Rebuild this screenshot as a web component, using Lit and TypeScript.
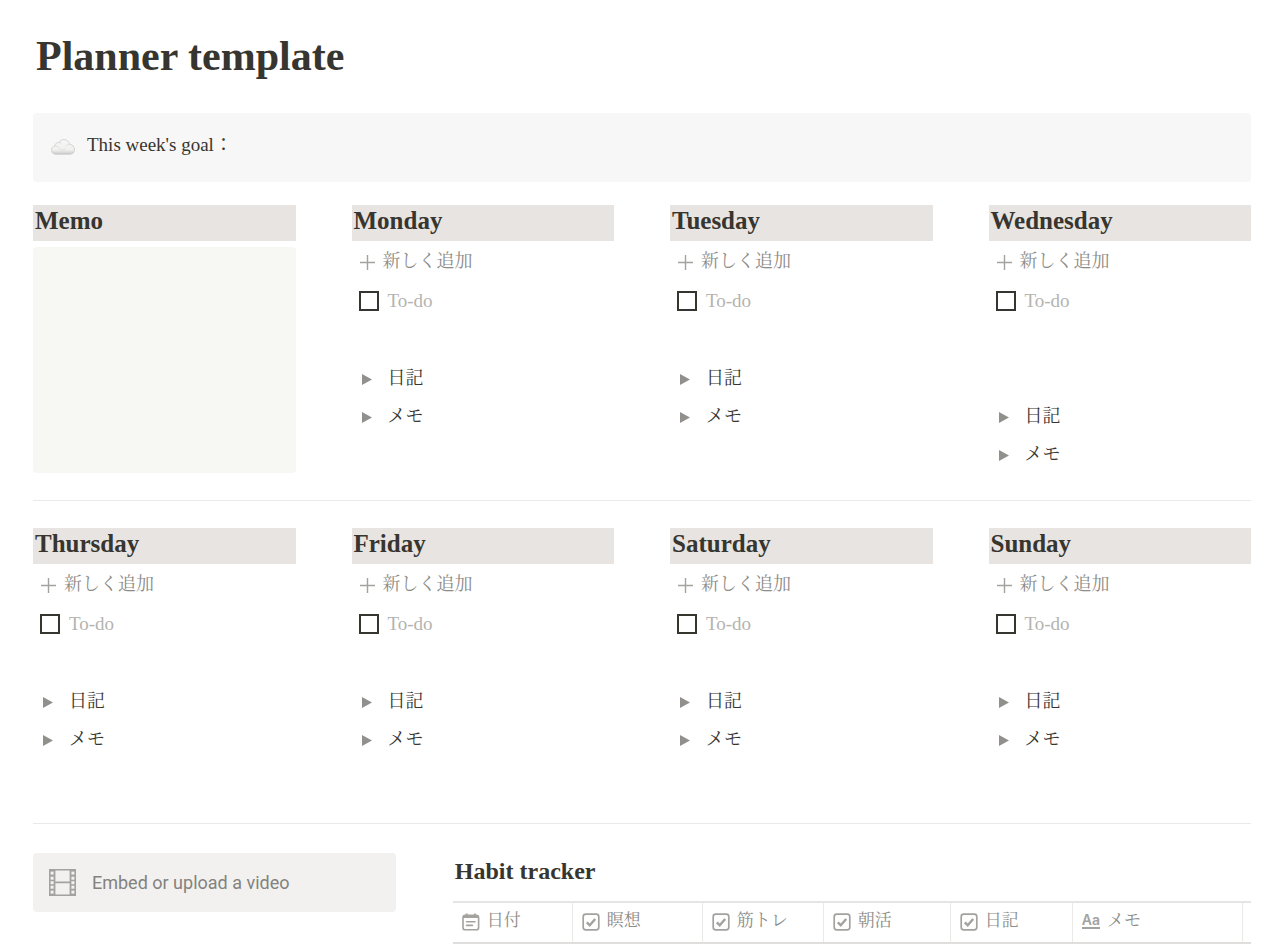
import { LitElement, html, css, svg } from "lit";
import { customElement, property } from "lit/decorators.js";

interface Day {
  name: string;
  blanks: number;
  trailing: number;
}

const FIRST_HALF: Day[] = [
  { name: "Monday", blanks: 1, trailing: 0 },
  { name: "Tuesday", blanks: 1, trailing: 0 },
  { name: "Wednesday", blanks: 2, trailing: 0 },
];

const SECOND_HALF: Day[] = [
  { name: "Thursday", blanks: 1, trailing: 1 },
  { name: "Friday", blanks: 1, trailing: 1 },
  { name: "Saturday", blanks: 1, trailing: 1 },
  { name: "Sunday", blanks: 1, trailing: 1 },
];

const HABITS = [
  { label: "日付", kind: "date", col: "c-date" },
  { label: "瞑想", kind: "check", col: "c-meditate" },
  { label: "筋トレ", kind: "check", col: "c-train" },
  { label: "朝活", kind: "check", col: "c-morning" },
  { label: "日記", kind: "check", col: "c-diary" },
  { label: "メモ", kind: "title", col: "c-memo" },
];

const heading = css`
  .heading {
    margin: 0;
    padding: 0 2px 4px;
    font-size: 25px;
    line-height: 32px;
    font-weight: 700;
    background: #e8e4e1;
  }
`;

@customElement("planner-day")
export class PlannerDay extends LitElement {
  @property({ attribute: false }) day!: Day;

  static styles = [
    heading,
    css`
      :host {
        display: block;
      }
      .row {
        display: flex;
        align-items: center;
        box-sizing: border-box;
        height: 38px;
      }
      .tall {
        height: 40px;
      }
      .add {
        width: 100%;
        padding: 0 0 0 8px;
        gap: 8px;
        border: 0;
        background: none;
        color: #8d8c88;
        font: inherit;
        font-size: 18px;
        text-align: left;
        cursor: pointer;
      }
      .plus {
        width: 15px;
        height: 15px;
        margin-top: 2px;
      }
      .todo {
        padding-left: 7px;
        gap: 9px;
        color: #b4b3b0;
      }
      .box {
        appearance: none;
        box-sizing: border-box;
        width: 20px;
        height: 20px;
        margin: 0;
        border: 2px solid #37352f;
        background: #fff;
      }
      .box:checked {
        background: #37352f;
      }
      .toggle {
        padding-left: 10px;
        gap: 16px;
        font-size: 18px;
        list-style: none;
        cursor: pointer;
      }
      .arrow {
        width: 10px;
        height: 11px;
        margin-top: 3px;
        fill: #91908c;
      }
      details[open] .arrow {
        transform: rotate(90deg);
      }
    `,
  ];

  private toggle(label: string) {
    return html`<details>
      <summary class="row toggle">
        <svg class="arrow" viewBox="0 0 10 11" aria-hidden="true"><path d="M0 0L10 5.5L0 11Z" /></svg>
        <span>${label}</span>
      </summary>
    </details>`;
  }

  private blanks(count: number) {
    return Array.from({ length: count }, () => html`<div class="row"></div>`);
  }

  render() {
    const { name, blanks, trailing } = this.day;
    return html`
      <h2 class="heading">${name}</h2>
      <button class="row tall add" type="button">
        <svg class="plus" viewBox="0 0 15 15" aria-hidden="true">
          <path d="M7.5 0V15M0 7.5H15" stroke="#a3a29f" stroke-width="1.4" />
        </svg>
        <span>新しく追加</span>
      </button>
      <div class="row tall todo">
        <input class="box" type="checkbox" id="todo" />
        <label for="todo">To-do</label>
      </div>
      ${this.blanks(blanks)} ${this.toggle("日記")} ${this.toggle("メモ")} ${this.blanks(trailing)}
    `;
  }
}

@customElement("app-root")
export class AppRoot extends LitElement {
  static styles = [
    heading,
    css`
      :host {
        display: block;
        box-sizing: border-box;
        padding: 30px 29px 0 33px;
        background: #fff;
        color: #37352f;
        font-family: "Liberation Serif", "Noto Serif CJK JP", "Noto Sans CJK JP", serif;
        font-size: 19px;
        line-height: 28px;
      }
      .title {
        margin: 0 0 31px;
        padding-left: 3px;
        font-size: 42px;
        line-height: 52px;
        font-weight: 700;
      }
      .callout {
        display: flex;
        align-items: flex-start;
        gap: 12px;
        box-sizing: border-box;
        min-height: 69px;
        margin-bottom: 23px;
        padding: 18px;
        border-radius: 4px;
        background: #f8f7f7;
      }
      .cloud {
        width: 24px;
        height: 16px;
        margin-top: 8px;
      }
      .week {
        display: grid;
        grid-template-columns: repeat(4, minmax(0, 1fr));
        column-gap: 56px;
      }
      .memo {
        display: flex;
        flex-direction: column;
        gap: 6px;
      }
      .pad {
        flex: 1;
        border-radius: 4px;
        background: #f7f8f3;
      }
      .rule {
        height: 1px;
        margin: 27px 0;
        border: 0;
        background: #e9e9e7;
      }
      .bottom {
        display: grid;
        grid-template-columns: minmax(0, 5fr) minmax(0, 11fr);
        column-gap: 57px;
        align-items: start;
        padding-top: 2px;
      }
      .video {
        display: flex;
        align-items: center;
        gap: 16px;
        min-height: 59px;
        padding: 0 16px;
        border: 0;
        border-radius: 4px;
        background: #f2f1ef;
        color: #83827e;
        font-family: Roboto, "Liberation Sans", sans-serif;
        font-size: 18px;
        text-align: left;
        cursor: pointer;
      }
      .film {
        width: 27px;
        height: 27px;
      }
      .subtitle {
        margin: 0;
        padding: 2px 2px 14px;
        font-size: 24px;
        line-height: 32px;
      }
      .habits {
        width: 100%;
        table-layout: fixed;
        border-collapse: separate;
        border-spacing: 0;
        border-top: 2px solid #e6e5e3;
        border-bottom: 2px solid #dfdedc;
      }
      .habits th {
        box-sizing: border-box;
        height: 39px;
        padding: 0 0 3px 9px;
        border-right: 1px solid #e9e9e7;
        color: #8d8c88;
        font-size: 17px;
        line-height: 24px;
        font-weight: 400;
        text-align: left;
      }
      .habits td {
        padding: 0;
      }
      .c-date {
        width: 120px;
      }
      .c-meditate {
        width: 130px;
      }
      .c-train {
        width: 121px;
      }
      .c-morning {
        width: 127px;
      }
      .c-diary {
        width: 122px;
      }
      .c-memo {
        width: 170px;
      }
      .name {
        display: flex;
        align-items: center;
        gap: 7px;
      }
      .kind {
        flex: none;
        width: 18px;
        height: 18px;
        margin-top: 2px;
      }
      .aa {
        border-bottom: 2px solid #a3a29f;
        color: #a3a29f;
        font-family: Inter, "Liberation Sans", sans-serif;
        font-size: 14px;
        line-height: 14px;
        font-weight: 600;
      }
    `,
  ];

  private kindIcon(kind: string) {
    if (kind === "title") return html`<span class="aa" aria-hidden="true">Aa</span>`;
    const shape =
      kind === "date"
        ? svg`<rect x="1" y="2.4" width="15.6" height="14.4" rx="2.4" fill="none" stroke="#a3a29f" stroke-width="1.6"/>
            <path d="M1 5V4.2Q1 2 3.2 2H14.4Q16.6 2 16.6 4.2V5ZM3.8 .6h1.8v2H3.8ZM12 .6h1.8v2H12Z" fill="#a3a29f"/>
            <path d="M4.6 8.8H13M4.6 12.4H10.4" stroke="#a3a29f" stroke-width="1.6" stroke-linecap="round"/>`
        : svg`<rect x="1.2" y="1.2" width="15.6" height="15.6" rx="2.6" fill="none" stroke="#a3a29f" stroke-width="1.7"/>
            <path d="M4.8 9.4L7.7 12.2L13.2 6" fill="none" stroke="#a3a29f" stroke-width="2.4"/>`;
    return html`<svg class="kind" viewBox="0 0 18 18" aria-hidden="true">${shape}</svg>`;
  }

  private film() {
    const holes = [2.6, 7.7, 12.2, 16.7, 21.6];
    return html`<svg class="film" viewBox="0 0 27 27" aria-hidden="true">
      <path
        fill="#a3a29f"
        fill-rule="evenodd"
        d="M0 0H27V27H0ZM6.4 1.6V12.6H20.6V1.6ZM6.4 14.2V25.4H20.6V14.2Z"
      />
      ${holes.map(
        (y) => svg`<rect x="1.6" y=${y} width="3" height="3" fill="#f2f1ef"/>
          <rect x="22.4" y=${y} width="3" height="3" fill="#f2f1ef"/>`,
      )}
    </svg>`;
  }

  render() {
    return html`
      <h1 class="title">Planner template</h1>
      <div class="callout">
        <svg class="cloud" viewBox="0 0 24 16" aria-hidden="true">
          <defs>
            <linearGradient id="sky" x1="0" y1="0" x2="0" y2="1">
              <stop offset="0" stop-color="#f7f7f7" />
              <stop offset=".7" stop-color="#f0f0ef" />
              <stop offset="1" stop-color="#c9c8c6" />
            </linearGradient>
          </defs>
          <path
            d="M5 15.3C2.3 15.3 .5 13.6 .5 11.2C.5 9 2 7.3 4 7C4 4.6 5.8 3.3 8 3.5C9 1.6 10.8 .6 13 .6C16 .6 18.2 2.6 18.5 5.3C21.5 5.5 23.5 7.8 23.5 10.6C23.5 13.5 21.5 15.3 18.8 15.3Z"
            fill="url(#sky)"
            stroke="#cccbc9"
            stroke-width=".8"
          />
          <path
            d="M4 7C5.6 6.8 7 7.5 7.7 8.7M8 3.5C9.2 3.6 10.2 4.2 10.7 5M18.5 5.3C17 5.2 15.4 6 14.8 7.6M8 9.6C10 11.6 13.5 11.2 15 9.4"
            fill="none"
            stroke="#dad9d7"
            stroke-width=".8"
          />
        </svg>
        <span>This week's goal：</span>
      </div>

      <section class="week">
        <div class="memo">
          <h2 class="heading">Memo</h2>
          <div class="pad"></div>
        </div>
        ${FIRST_HALF.map((day) => html`<planner-day .day=${day}></planner-day>`)}
      </section>
      <hr class="rule" />
      <section class="week">
        ${SECOND_HALF.map((day) => html`<planner-day .day=${day}></planner-day>`)}
      </section>
      <hr class="rule" />

      <section class="bottom">
        <button class="video" type="button">${this.film()}<span>Embed or upload a video</span></button>
        <div>
          <h2 class="subtitle">Habit tracker</h2>
          <table class="habits">
            <colgroup>
              ${HABITS.map((h) => html`<col class=${h.col} />`)}
              <col />
            </colgroup>
            <thead>
              <tr>
                ${HABITS.map(
                  (h) => html`<th scope="col">
                    <div class="name">${this.kindIcon(h.kind)}<span>${h.label}</span></div>
                  </th>`,
                )}
                <td></td>
              </tr>
            </thead>
          </table>
        </div>
      </section>
    `;
  }
}
